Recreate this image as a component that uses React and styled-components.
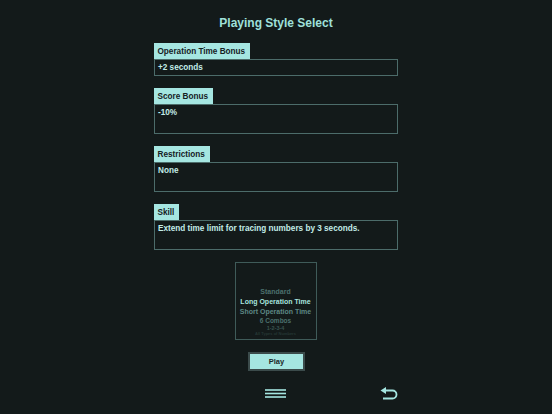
import React from 'react';
import styled, { createGlobalStyle } from 'styled-components';

const GlobalStyle = createGlobalStyle`
  html, body {
    margin: 0;
    padding: 0;
    background: #131a1a;
  }
  body {
    font-family: "Liberation Sans", Arial, sans-serif;
  }
`;

const Screen = styled.main`
  width: 552px;
  height: 414px;
  display: flex;
  flex-direction: column;
  align-items: center;
  background: #131a1a;
  box-sizing: border-box;
  padding-top: 15px;
`;

const Title = styled.h1`
  margin: 0 0 12px;
  font-size: 12px;
  font-weight: bold;
  color: #9fe0da;
  line-height: 16px;
`;

const Column = styled.div`
  width: 244px;
  margin-left: -1px;
  display: flex;
  flex-direction: column;
  gap: 12px;
`;

const Section = styled.section`
  display: flex;
  flex-direction: column;
  align-items: flex-start;
`;

const Tab = styled.div`
  background: #a5e6e1;
  color: #15201f;
  font-size: 8.2px;
  font-weight: bold;
  height: 16px;
  line-height: 17px;
  padding: 0 5px 0 4px;
`;

const Field = styled.div`
  align-self: stretch;
  box-sizing: border-box;
  height: ${({ $tall }) => ($tall ? '30px' : '17px')};
  border: 1px solid #4c6c6a;
  padding: 2px 3px 0 3.5px;
  color: #c3ece8;
  font-size: 8.2px;
  font-weight: bold;
  line-height: 11px;
`;

const Picker = styled.div`
  align-self: center;
  box-sizing: border-box;
  width: 82px;
  height: 78px;
  border: 1px solid #3f5b59;
  display: flex;
  flex-direction: column;
  align-items: center;
  padding-top: 24px;
  overflow: hidden;
`;

const Option = styled.div`
  font-weight: bold;
  font-size: ${({ $size }) => $size}px;
  line-height: ${({ $line }) => $line}px;
  color: ${({ $tone }) => $tone};
  white-space: nowrap;
`;

const PlayButton = styled.button`
  align-self: center;
  width: 57px;
  height: 19px;
  margin-left: 2px;
  box-sizing: border-box;
  border: 2px solid #3b4b4b;
  background: #a5e6e1;
  color: #1b2828;
  font-family: "Liberation Sans", Arial, sans-serif;
  font-size: 7.5px;
  font-weight: bold;
  padding: 0;
`;

const Footer = styled.footer`
  width: 244px;
  margin-top: 16px;
  display: flex;
  align-items: center;
  justify-content: space-between;
  padding-left: 111px;
  box-sizing: border-box;
`;

const IconButton = styled.div`
  display: flex;
  align-items: center;
  justify-content: center;
`;

const options = [
  { label: 'Standard', size: 7, line: 10, tone: '#4c706d' },
  { label: 'Long Operation Time', size: 7, line: 10, tone: '#a8e4df' },
  { label: 'Short Operation Time', size: 7, line: 10, tone: '#5d8784' },
  { label: '6 Combos', size: 6.5, line: 8, tone: '#4c706d' },
  { label: '1-2-3-4', size: 5.5, line: 6, tone: '#38524f' },
  { label: 'All Types of Numbers', size: 4, line: 5, tone: '#263735' },
];

const sections = [
  { label: 'Operation Time Bonus', value: '+2 seconds' },
  { label: 'Score Bonus', value: '-10%', tall: true },
  { label: 'Restrictions', value: 'None', tall: true },
  { label: 'Skill', value: 'Extend time limit for tracing numbers by 3 seconds.', tall: true },
];

const MenuIcon = () => (
  <svg width="21" height="9" viewBox="0 0 21 9">
    <g stroke="#a5e6e1" strokeWidth="1.6">
      <line x1="0" y1="1" x2="21" y2="1" />
      <line x1="0" y1="4.5" x2="21" y2="4.5" />
      <line x1="0" y1="8" x2="21" y2="8" />
    </g>
  </svg>
);

const BackIcon = () => (
  <svg width="18" height="13" viewBox="0 0 18 13">
    <path
      d="M6 3.5 H12.5 A4 4 0 0 1 12.5 11.5 H3"
      fill="none"
      stroke="#a5e6e1"
      strokeWidth="1.8"
    />
    <path d="M0.5 3.5 L6 0 L6 7 Z" fill="#a5e6e1" />
  </svg>
);

export default function App() {
  return (
    <>
      <GlobalStyle />
      <Screen>
        <Title>Playing Style Select</Title>
        <Column>
          {sections.map((s) => (
            <Section key={s.label}>
              <Tab>{s.label}</Tab>
              <Field $tall={s.tall}>{s.value}</Field>
            </Section>
          ))}
          <Picker>
            {options.map((o) => (
              <Option key={o.label} $size={o.size} $line={o.line} $tone={o.tone}>
                {o.label}
              </Option>
            ))}
          </Picker>
          <PlayButton>Play</PlayButton>
        </Column>
        <Footer>
          <IconButton>
            <MenuIcon />
          </IconButton>
          <IconButton>
            <BackIcon />
          </IconButton>
        </Footer>
      </Screen>
    </>
  );
}
